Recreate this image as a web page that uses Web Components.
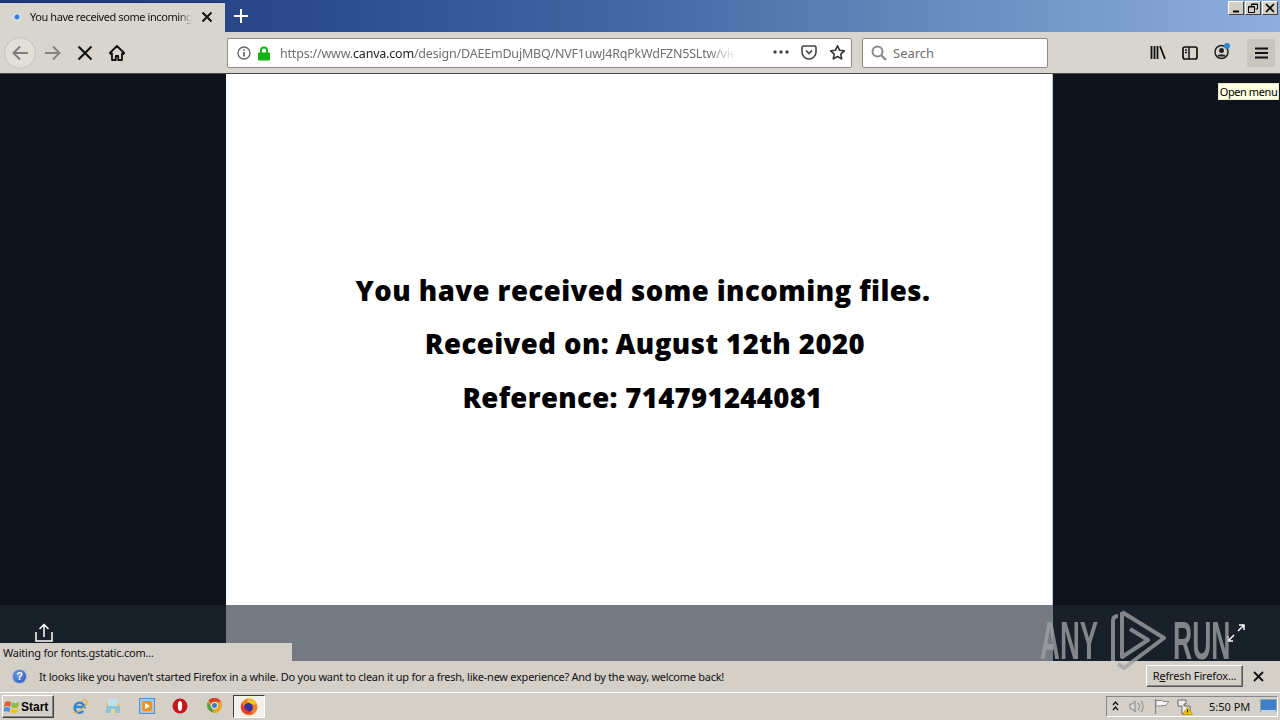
<!DOCTYPE html>
<html><head><meta charset="utf-8"><style>
html,body{margin:0;height:100%;overflow:hidden}
body{width:1280px;height:720px;font-family:"Noto Sans","Liberation Sans",sans-serif;font-size:11px;color:#111}
</style></head><body>
<ff-window></ff-window>
<template id="t-tabs"><style>
:host{display:flex;height:32px;background:linear-gradient(90deg,#1d3878 0%,#2c4b8e 25%,#4468a4 50%,#6a8dc0 75%,#8fb0de 100%);box-sizing:border-box;position:relative}
.tab{width:225px;margin-top:2px;background:#d8d5ce;border-top:1px solid #16307a;box-sizing:border-box;display:flex;align-items:center;height:30px;padding-left:12px;position:relative}
.dot{width:10px;height:10px;border-radius:50%;margin-top:-1px;background:radial-gradient(circle,#2f7fd8 0 2px,#dbe6f2 3px,transparent 5px)}
.t{margin-left:8px;width:162px;white-space:nowrap;overflow:hidden;font-size:11px;letter-spacing:-.42px;margin-top:-2px;-webkit-mask-image:linear-gradient(90deg,#000 92%,transparent);mask-image:linear-gradient(90deg,#000 92%,transparent)}
.x{margin-left:9px;display:flex;margin-top:-1px}
.plus{margin:9px 0 0 9px;display:flex;height:14px}
.ctl{position:absolute;right:2px;top:1px;display:flex;gap:1px}
.ctl i{display:flex;width:14px;height:12px;background:#d4d0c8;border:1px solid;border-color:#fff #404040 #404040 #fff;box-sizing:content-box;align-items:center;justify-content:center}
</style>
<div class="tab"><span class="dot"></span><span class="t">You have received some incoming files</span>
<span class="x"><svg width="12" height="12" viewBox="0 0 12 12"><path d="M1.500 1.500l9 9M10.500 1.500l-9 9" stroke="#111" stroke-width="2"/></svg></span></div>
<span class="plus"><svg width="14" height="14" viewBox="0 0 14 14"><path d="M7 0v14M0 7h14" stroke="#fff" stroke-width="2"/></svg></span>
<div class="ctl">
<i><svg width="10" height="9"><path d="M2 7.500h6" stroke="#000" stroke-width="2"/></svg></i>
<i><svg width="10" height="10"><path d="M3.500 3V1h6v5H7.500M.5 3.500h6v6h-6z" fill="none" stroke="#000"/><path d="M.5 4h6M3.500 1.500h6" stroke="#000"/></svg></i>
<i><svg width="10" height="10"><path d="M1 1l8 8M9 1L1 9" stroke="#000" stroke-width="1.600"/></svg></i>
</div></template>

<template id="t-bar"><style>
:host{display:flex;align-items:center;height:42px;padding-top:1px;background:#d8d5ce;border-bottom:1px solid #4a4a48;box-sizing:border-box;position:relative}
.back{width:32px;height:32px;border-radius:50%;margin-left:4px;border:1px solid #c4c1ba;background:#e2dfd9;box-sizing:border-box;display:flex;align-items:center;justify-content:center}
.i{display:flex}
.url{width:625px;height:30px;background:#fff;border:1px solid #8b8b88;border-radius:2px;box-sizing:border-box;display:flex;align-items:center;position:absolute;left:227px;top:6px}
.txt{font-size:12.500px;color:#6f6f6f;width:456px;white-space:nowrap;overflow:hidden;letter-spacing:-.2px;margin-left:9px;-webkit-mask-image:linear-gradient(90deg,#000 94%,transparent);mask-image:linear-gradient(90deg,#000 94%,transparent)}
.txt b{font-weight:400;color:#222}
.search{position:absolute;left:862px;top:6px;width:186px;height:30px;background:#fff;border:1px solid #8b8b88;border-radius:2px;box-sizing:border-box;display:flex;align-items:center;padding-left:8px;gap:6px;font-size:13px;color:#6f6f6f}
.right{position:absolute;left:1150px;top:13px;display:flex;align-items:center}
.menu{position:absolute;left:1247px;top:7px;width:28px;height:28px;background:#c8c5be;border-radius:2px;display:flex;align-items:center;justify-content:center}
</style>
<span class="back"><svg width="18" height="16" viewBox="0 0 18 16"><path d="M9 1.500L2.500 8 9 14.500M3 8h14" fill="none" stroke="#7c7c7c" stroke-width="2"/></svg></span>
<span class="i" style="margin-left:8px"><svg width="18" height="16" viewBox="0 0 18 16"><path d="M9 1.500L15.500 8 9 14.500M15 8H1" fill="none" stroke="#85857f" stroke-width="2"/></svg></span>
<span class="i" style="margin-left:15px"><svg width="16" height="16" viewBox="0 0 16 16"><path d="M1.500 1.500l13 13M14.500 1.500l-13 13" stroke="#111" stroke-width="2.200"/></svg></span>
<span class="i" style="margin-left:16px"><svg width="16" height="16" viewBox="0 0 16 16"><path d="M8 1L.8 8l1.200 1.200L3 8.300V15h3.800v-4h2.400v4H13V8.300l1 .9L15.200 8z" fill="none" stroke="#111" stroke-width="1.800" stroke-linejoin="round"/></svg></span>
<div class="url">
<span class="i" style="margin-left:9px"><svg width="14" height="14" viewBox="0 0 14 14"><circle cx="7" cy="7" r="6" fill="none" stroke="#666" stroke-width="1.300"/><path d="M7 6v4.500M7 3.300v1.500" stroke="#555" stroke-width="1.600"/></svg></span>
<span class="i" style="margin-left:6px"><svg width="14" height="15" viewBox="0 0 14 15"><path d="M4 7V4.500a3 3 0 0 1 6 0V7" fill="none" stroke="#12b312" stroke-width="2"/><rect x="1" y="6.500" width="12" height="8" rx="1" fill="#12b312"/></svg></span>
<span class="txt">https://www.<b>canva.com</b>/design/DAEEmDujMBQ/NVF1uwJ4RqPkWdFZN5SLtw/view?utm_content</span>
<span class="i" style="position:absolute;left:544px;top:10px"><svg width="18" height="6"><circle cx="3" cy="3" r="1.700" fill="#444"/><circle cx="9" cy="3" r="1.700" fill="#444"/><circle cx="15" cy="3" r="1.700" fill="#444"/></svg></span>
<span class="i" style="position:absolute;left:573px;top:6px"><svg width="16" height="15" viewBox="0 0 16 15"><path d="M2.500 1h11A1.500 1.500 0 0 1 15 2.500V7a7 7 0 0 1-14 0V2.500A1.500 1.500 0 0 1 2.500 1z" fill="none" stroke="#444" stroke-width="1.600"/><path d="M5 5.500l3 3 3-3" fill="none" stroke="#444" stroke-width="1.700"/></svg></span>
<span class="i" style="position:absolute;left:601px;top:5px"><svg width="17" height="17" viewBox="0 0 17 17"><path d="M8.500 1.800l2 4.400 4.800.6-3.500 3.300.9 4.800-4.200-2.400-4.200 2.400.9-4.800L1.700 6.800l4.800-.6z" fill="none" stroke="#333" stroke-width="1.600" stroke-linejoin="round"/></svg></span>
</div>
<div class="search"><svg width="16" height="16" viewBox="0 0 16 16"><circle cx="6.500" cy="6.500" r="5" fill="none" stroke="#8a8a8a" stroke-width="2"/><path d="M10 10l5 5" stroke="#8a8a8a" stroke-width="2.400"/></svg><span>Search</span></div>
<div class="right">
<svg width="16" height="15" viewBox="0 0 16 15"><path d="M1.500 1v13M4.500 1v13M7.500 1v13" stroke="#111" stroke-width="1.800"/><path d="M10 1l5 13" stroke="#111" stroke-width="1.800"/></svg>
<svg style="margin-left:16px" width="16" height="14" viewBox="0 0 16 14"><rect x="1" y="1" width="14" height="12" rx="2" fill="none" stroke="#111" stroke-width="1.700"/><path d="M7 1v12M3 4h2M3 6.500h2" stroke="#111" stroke-width="1.500"/></svg>
<svg style="margin-left:16px;margin-top:-3px" width="17" height="18" viewBox="0 0 17 18"><circle cx="7.500" cy="10" r="6.500" fill="none" stroke="#222" stroke-width="1.500"/><circle cx="7.500" cy="8.500" r="2.500" fill="#222"/><path d="M3 14.500c1-3 8-3 9 0" fill="#222"/><circle cx="13" cy="4" r="3" fill="#2a86d8"/></svg>
</div>
<div class="menu"><svg width="13" height="12" viewBox="0 0 13 12"><path d="M0 1.500h13M0 6h13M0 10.500h13" stroke="#111" stroke-width="1.800"/></svg></div>
</template>

<template id="t-view"><style>
:host{display:grid;grid-template-columns:226px 827px 1fr;grid-template-rows:531px 56px;background:#0e141c;position:relative;height:587px;overflow:hidden}
.page{background:#fff;display:flex;flex-direction:column;align-items:center;justify-content:center;border-right:1px solid #c9c9c9;box-sizing:border-box;color:#000;font-family:"Open Sans","Noto Sans",sans-serif;font-weight:800;font-size:27.500px;letter-spacing:.46px}
.page div{height:53.500px;line-height:53.500px;white-space:nowrap;position:relative;left:4px;top:4.500px}
.page .b{left:6px}
.page .r{letter-spacing:.33px;left:3.500px}
.l{background:#18202a;display:flex;justify-content:flex-start}
.c{background:#757a82}
.share{margin:18px 0 0 35px;display:flex;height:19px}
.expand{position:absolute;left:1227px;top:550px;display:flex}
.tip{position:absolute;left:1218px;top:9px;background:#ffffe1;border:1px solid #e8e8d0;font-size:11px;color:#000;height:17px;line-height:15px;box-sizing:border-box;font-family:"Noto Sans",sans-serif;white-space:nowrap;width:61px;text-align:center;letter-spacing:-.42px}
.status{position:absolute;left:0;top:569px;width:292px;height:18px;background:#d4d0c8;font-size:11px;line-height:20px;padding-left:3px;box-sizing:border-box;white-space:nowrap;color:#111;letter-spacing:-.22px}
</style>
<div></div><div class="page"><div>You have received some incoming files.</div><div class="b">Received on:<span style="word-spacing:-1.500px"> </span>August 12th 2020</div><div class="r">Reference: 714791244081</div></div><div></div>
<div class="l"><span class="share"><svg width="18" height="19" viewBox="0 0 18 19"><path d="M1 9v9h16V9M9 14V2M4.500 6L9 1.500 13.500 6" fill="none" stroke="#fff" stroke-width="1.500"/></svg></span></div><div class="c"></div><div class="l"></div>
<span class="expand"><svg width="18" height="18" viewBox="0 0 18 18"><path d="M11 7l6-6M12 1h5v5M7 11l-6 6M1 12v5h5" fill="none" stroke="#fff" stroke-width="1.500"/></svg></span>
<div class="tip">Open menu</div>
<div class="status">Waiting for fonts.gstatic.com...</div>
</template>

<template id="t-note"><style>
:host{display:flex;align-items:center;height:32px;background:#d4d0c8;border-bottom:1px solid #fff;box-sizing:border-box;position:relative;font-size:11px;letter-spacing:-.26px;color:#111}
.q{width:15px;height:15px;border-radius:50%;background:radial-gradient(circle at 40% 35%,#6f9be8,#2450b0);border:1px solid #aab8dc;color:#fff;font:bold 11px/15px "Liberation Sans",sans-serif;text-align:center;margin-left:12px;box-sizing:border-box;line-height:13px;letter-spacing:0}
.m{margin-left:12px;white-space:nowrap}
.btn{position:absolute;left:1146px;top:4px;width:97px;height:22px;border:1px solid;border-color:#fff #555 #555 #fff;background:#d4d0c8;box-sizing:border-box;text-align:center;line-height:20px;box-shadow:inset -1px -1px #888;white-space:nowrap;letter-spacing:-.15px}
.x{position:absolute;left:1253px;top:10px;display:flex}
u{text-decoration:underline}
</style><span class="q">?</span><span class="m"><slot></slot></span><span class="btn">R<u>e</u>fresh Firefox...</span>
<span class="x"><svg width="11" height="11"><path d="M1 1l9 9M10 1l-9 9" stroke="#111" stroke-width="1.800"/></svg></span></template>

<template id="t-task"><style>
:host{display:flex;align-items:center;height:27px;background:#d4d0c8;position:relative;box-sizing:border-box;font-size:11px;color:#111}
.start{margin-left:2px;width:52px;height:23px;border:1px solid;border-color:#fff #404040 #404040 #fff;box-shadow:inset -1px -1px #888;box-sizing:border-box;display:flex;align-items:center;padding-left:1px;gap:1px;font:bold 12px "Liberation Sans",sans-serif;color:#000}
.ic{position:absolute;top:5px;display:flex}
.act{position:absolute;left:233px;top:2px;width:32px;height:23px;background:#f3f1ee;border:1px solid;border-color:#404040 #fff #fff #404040;box-sizing:border-box;display:flex;align-items:center;justify-content:center}
.tray{position:absolute;left:1106px;top:3px;width:172px;height:21px;border:1px solid;border-color:#888 #fff #fff #888;box-sizing:border-box}
.tm{position:absolute;left:1209px;top:6px;font-size:11px;white-space:nowrap;line-height:15px}
</style>
<span class="start"><svg width="16" height="16" viewBox="0 0 18 18"><path d="M1 4c2-2 5-2 7 0l-1 5c-2-1.500-5-1.500-7 0z" fill="#e2622a"/><path d="M9 3.500c2 1.500 5 1.500 8-.5l-1 6c-3 1.500-5 1.500-8 0z" fill="#8dbb45"/><path d="M0 10c2-1.500 5-1.500 7 0l-1 5c-2-1.500-5-1.500-7 0z" fill="#4f8fdc"/><path d="M8 10.500c2 1 5 1 8-.5l-1 5c-3 1.500-5 1.500-8 0z" fill="#efc232"/></svg>Start</span>
<span class="ic" style="left:71px"><svg width="17" height="17" viewBox="0 0 17 17"><path d="M3 9h10.500a5 5 0 1 0-1.200 4" fill="none" stroke="#2f86d8" stroke-width="2.400"/><path d="M3 14c-2 2 3 1 8-3s6-8 4-9c-1-.5-3 .2-4.500 1" fill="none" stroke="#e2b43b" stroke-width="1.200"/></svg></span>
<span class="ic" style="left:105px"><svg width="16" height="17" viewBox="0 0 16 17"><path d="M1 4h5l1 2h8v9H1z" fill="#e5cc7a"/><rect x="3" y="1" width="9" height="8" fill="#bfe0ef"/><rect x="1" y="8" width="14" height="7" fill="#8fc4d8"/><rect x="6" y="11" width="4" height="5" fill="#e8d690"/></svg></span>
<span class="ic" style="left:139px"><svg width="16" height="16" viewBox="0 0 16 16"><rect x=".5" y=".5" width="15" height="15" fill="#a9c6e6" stroke="#5a8cc8"/><rect x="3" y="3" width="10" height="10" rx="2" fill="#f29320"/><path d="M6 5l5 3-5 3z" fill="#fff"/></svg></span>
<span class="ic" style="left:172px"><svg width="16" height="16" viewBox="0 0 16 16"><circle cx="8" cy="8" r="7.500" fill="#c8161c"/><ellipse cx="8" cy="8" rx="2.200" ry="5" fill="#fff"/></svg></span>
<span class="ic" style="left:207px"><svg width="15" height="15" viewBox="0 0 32 32"><circle cx="16" cy="16" r="16" fill="#e2a82b"/><path d="M16 0a16 16 0 0 1 14 8H16a8 8 0 0 0-7.500 5L3 5a16 16 0 0 1 13-5z" fill="#d9402f"/><path d="M2 8l8 14 5 9A16 16 0 0 1 2 8z" fill="#4aa04e"/><circle cx="16" cy="16" r="6.500" fill="#3a78c4" stroke="#fff" stroke-width="2"/></svg></span>
<span class="act"><svg width="18" height="18" viewBox="0 0 18 18"><circle cx="9" cy="9" r="8.500" fill="#f2822a"/><path d="M9 .5a8.500 8.500 0 0 1 8 5.500l-5 1-5-4z" fill="#f4c12f"/><circle cx="8.500" cy="9.500" r="4.500" fill="#3d2d9b"/><path d="M2 4c1 5 4 9 11 11-6 3-12-1-12-6z" fill="#e23b36"/></svg></span>
<div class="tray"></div>
<span class="ic" style="left:1112px;top:8px"><svg width="7" height="10"><path d="M1 4l2.500-3L6 4M1 9l2.500-3L6 9" fill="none" stroke="#111" stroke-width="1.300"/></svg></span>
<span class="ic" style="left:1129px;top:6px"><svg width="16" height="15" viewBox="0 0 16 15"><path d="M1 5h2.500L6 2v11L3.500 10H1z" fill="#d8d8d8" stroke="#888"/><path d="M9 4a5 5 0 0 1 0 7M12 2a8 8 0 0 1 0 11" fill="none" stroke="#999" stroke-width="1.200"/></svg></span>
<span class="ic" style="left:1154px;top:6px"><svg width="16" height="15" viewBox="0 0 16 15"><path d="M1.500 0v15" stroke="#888" stroke-width="1.200"/><path d="M2 1.500h6l1 1h6l-3 3.500 0 .5H8L7 7H2z" fill="#f4f4f4" stroke="#888"/></svg></span>
<span class="ic" style="left:1177px;top:6px"><svg width="17" height="16" viewBox="0 0 17 16"><path d="M1 1h8v4H7v2h6v8H5V7H1z" fill="#eee" stroke="#666"/><path d="M10.500 8l5 7.500h-10z" fill="#f4c400" stroke="#b08c00" stroke-width=".6"/><path d="M10.500 10.500v3" stroke="#111"/></svg></span>
<span class="tm">5:50 PM</span>
<span class="ic" style="left:1260px;top:6px"><svg width="17" height="15" viewBox="0 0 17 15"><rect x=".5" y=".5" width="16" height="12" fill="#3f7fc8" stroke="#8aa"/><path d="M1 11h15v3H1z" fill="#c8d0d8"/></svg></span>
</template>

<template id="t-mark"><style>
:host{position:absolute;left:1040px;top:607px;display:flex;align-items:flex-start;height:66px;opacity:.78;color:#a0a2a4;font:700 53px/40px "Liberation Sans",sans-serif;pointer-events:none}
span{display:block;margin-top:14px;width:58px;transform-origin:left top;white-space:nowrap;transform:scaleX(.52)}
span:last-child{width:57px;margin-left:5px;transform:scaleX(.5)}
svg{margin-left:10px;flex:none}
</style><span>ANY</span><svg width="60" height="66" viewBox="0 0 60 66"><path d="M10 9Q5 9 5 14V54" fill="none" stroke="#a0a2a4" stroke-width="4"/><path d="M14 5L56 31 16 61 10 57M14 5V50L40 33 22 22" fill="none" stroke="#a0a2a4" stroke-width="4" stroke-linejoin="round"/></svg><span>RUN</span></template>

<template id="t-win"><style>:host{display:flex;flex-direction:column;width:1280px;height:720px;overflow:hidden;position:relative}ff-view{flex:none;height:587px}</style>
<ff-tabs></ff-tabs><ff-bar></ff-bar><ff-view></ff-view>
<ff-note>It looks like you haven’t started Firefox in a while. Do you want to clean it up for a fresh, like-new experience? And by the way, welcome back!</ff-note>
<ff-task></ff-task><ff-mark></ff-mark></template>
<script>
for(const [n,t] of [['ff-tabs','t-tabs'],['ff-bar','t-bar'],['ff-view','t-view'],['ff-note','t-note'],['ff-task','t-task'],['ff-mark','t-mark'],['ff-window','t-win']]){
customElements.define(n,class extends HTMLElement{constructor(){super();this.attachShadow({mode:'open'}).appendChild(document.getElementById(t).content.cloneNode(true));}});
}
</script>
</body></html>
